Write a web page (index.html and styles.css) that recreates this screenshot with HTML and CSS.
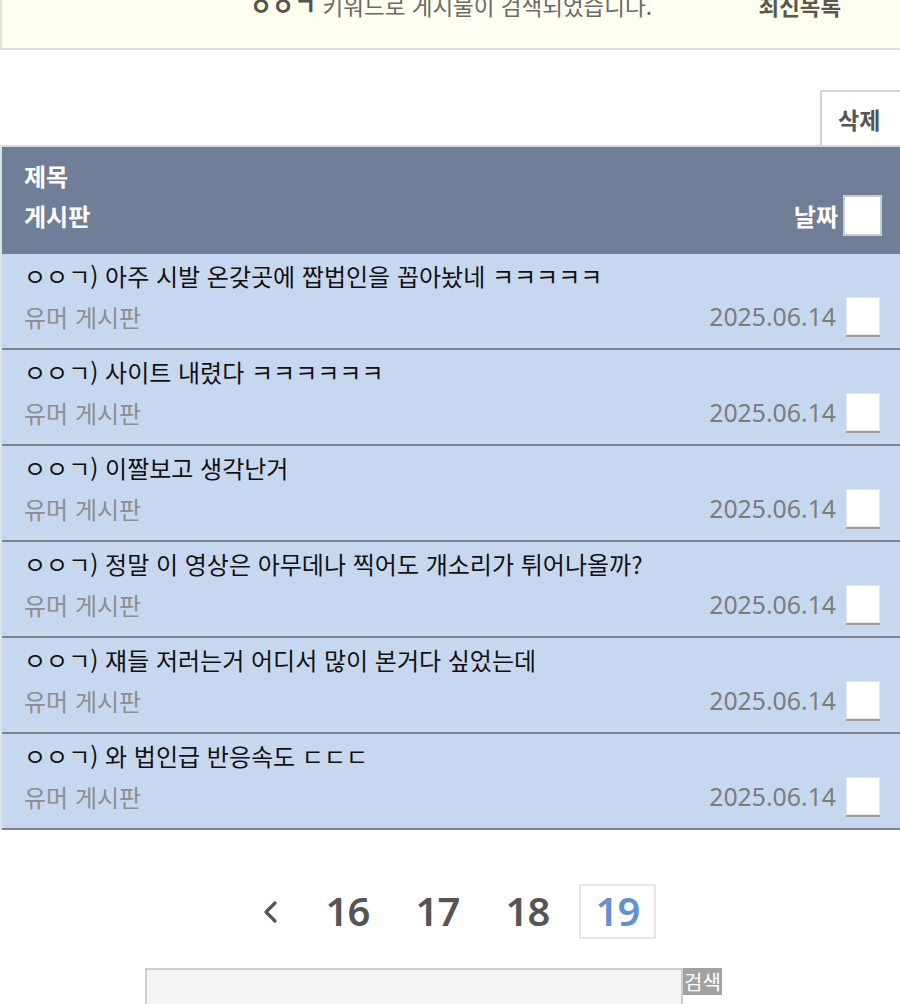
FILE: index.html
```html
<!DOCTYPE html>
<html lang="ko">
<head>
<meta charset="utf-8">
<title>검색 결과</title>
<link rel="stylesheet" href="styles.css">
</head>
<body>
<div class="notice">
  <span></span>
  <div class="notice-text"><b>ㅇㅇㄱ</b> 키워드로 게시물이 검색되었습니다.</div>
  <a class="latest" href="#">최신목록</a>
</div>

<div class="toolbar">
  <button class="btn-delete" type="button">삭제</button>
</div>

<div class="list">
  <div class="row head">
    <div class="title">제목</div>
    <div class="board">게시판</div>
    <div class="date">날짜</div>
    <span class="check"></span>
  </div>
  <div class="row">
    <div class="title">ㅇㅇㄱ) 아주 시발 온갖곳에 짭법인을 꼽아놨네 ㅋㅋㅋㅋㅋ</div>
    <div class="board">유머 게시판</div>
    <div class="date">2025.06.14</div>
    <span class="check"></span>
  </div>
  <div class="row">
    <div class="title">ㅇㅇㄱ) 사이트 내렸다 ㅋㅋㅋㅋㅋㅋ</div>
    <div class="board">유머 게시판</div>
    <div class="date">2025.06.14</div>
    <span class="check"></span>
  </div>
  <div class="row">
    <div class="title">ㅇㅇㄱ) 이짤보고 생각난거</div>
    <div class="board">유머 게시판</div>
    <div class="date">2025.06.14</div>
    <span class="check"></span>
  </div>
  <div class="row">
    <div class="title">ㅇㅇㄱ) 정말 이 영상은 아무데나 찍어도 개소리가 튀어나올까?</div>
    <div class="board">유머 게시판</div>
    <div class="date">2025.06.14</div>
    <span class="check"></span>
  </div>
  <div class="row">
    <div class="title">ㅇㅇㄱ) 쟤들 저러는거 어디서 많이 본거다 싶었는데</div>
    <div class="board">유머 게시판</div>
    <div class="date">2025.06.14</div>
    <span class="check"></span>
  </div>
  <div class="row">
    <div class="title">ㅇㅇㄱ) 와 법인급 반응속도 ㄷㄷㄷ</div>
    <div class="board">유머 게시판</div>
    <div class="date">2025.06.14</div>
    <span class="check"></span>
  </div>
</div>

<div class="pager">
  <a class="page prev" href="#"><svg width="16" height="24" viewBox="0 0 16 24"><path d="M13 3 L4 12 L13 21" fill="none" stroke="#555" stroke-width="3.2" stroke-linecap="round" stroke-linejoin="round"/></svg></a>
  <a class="page" href="#">16</a>
  <a class="page" href="#">17</a>
  <a class="page" href="#">18</a>
  <a class="page current" href="#">19</a>
</div>

<div class="search">
  <input class="search-input" type="text">
  <button class="search-btn" type="button">검색</button>
</div>
</body>
</html>
```
FILE: styles.css
```css
* { box-sizing: border-box; }
html, body { margin: 0; padding: 0; background: #fff; overflow: hidden; }
body {
  width: 900px;
  font-family: "Noto Sans CJK KR", "Noto Sans", sans-serif;
  color: #111;
}

.notice {
  margin-top: -10px;
  height: 60px;
  background: #fefef1;
  border-left: 2px solid #e2e2da;
  border-bottom: 2px solid #deded6;
  display: grid;
  grid-template-columns: 1fr auto 1fr;
  align-items: start;
  line-height: 30px;
}
.notice-text { font-size: 22.5px; color: #6b6a64; }
.notice-text b { font-size: 24px; color: #57544b; font-weight: 700; }
.latest {
  justify-self: end;
  margin-right: 59px;
  font-size: 22.4px;
  font-weight: 700;
  color: #5a574d;
  text-decoration: none;
}

.toolbar {
  display: flex;
  justify-content: flex-end;
  margin-top: 40px;
}
.btn-delete {
  width: 82px;
  height: 55px;
  margin-right: -2px;
  background: #fff;
  border: 2px solid #d3d3d3;
  border-right: 0;
  border-bottom: 0;
  font-family: inherit;
  font-size: 23px;
  font-weight: 700;
  color: #555;
  text-align: left;
  padding: 0 0 0 16px;
}

.list {
  border-top: 2px solid #d6d9de;
  border-left: 2px solid #dde1e8;
}
.row {
  display: grid;
  grid-template-columns: 1fr auto auto;
  grid-template-rows: 42px 40px;
  align-items: center;
  padding: 0 20px 12px 22px;
  background: #c8d7f0;
  border-bottom: 2px solid #7f858f;
}
.row .title {
  grid-column: 1 / 4;
  font-size: 24px;
  color: #111;
  white-space: nowrap;
}
.row .board { font-size: 24px; color: #8b8d92; }
.row .date {
  font-family: "Noto Sans", "Noto Sans CJK KR", sans-serif;
  font-size: 24.8px;
  color: #7a7c80;
}
.check {
  width: 34px;
  height: 38px;
  margin-left: 10px;
  background: #fff;
  border: 1px solid #e4e6ea;
  box-shadow: 0 2px 0 0 #9aa0aa;
}

.row.head {
  background: #717e97;
  padding: 8px 18px 19px 22px;
  grid-template-rows: 40px 40px;
  border-bottom: 0;
}
.row.head .title,
.row.head .board,
.row.head .date {
  color: #fff;
  font-weight: 700;
  font-size: 24px;
  font-family: "Noto Sans CJK KR", sans-serif;
}
.row.head .check {
  width: 39px;
  height: 41px;
  margin-left: 5px;
  border: 2px solid #c9ccd2;
  box-shadow: none;
}

.pager {
  display: flex;
  justify-content: center;
  gap: 13px;
  margin-top: 54px;
}
.page {
  width: 77px;
  height: 55px;
  display: flex;
  align-items: center;
  justify-content: center;
  font-family: "Noto Sans", sans-serif;
  font-size: 40px;
  font-weight: 600;
  color: #555;
  text-decoration: none;
  letter-spacing: -1px;
  border: 2px solid transparent;
  padding-bottom: 3px;
}
.page.prev { width: 52px; padding-bottom: 0; }
.page.current { color: #6490d2; border-color: #e6e6e6; }

.search {
  display: flex;
  align-items: flex-start;
  margin-top: 29px;
  padding-left: 145px;
}
.search-input {
  width: 538px;
  height: 44px;
  background: #f4f4f4;
  border: 2px solid #cfcfcf;
  border-bottom: 0;
  margin: 0;
}
.search-btn {
  width: 39px;
  height: 27px;
  padding: 0;
  border: 0;
  background: #a2a2a2;
  color: #fff;
  font-family: "Noto Sans CJK KR", sans-serif;
  font-size: 20px;
  line-height: 27px;
  overflow: hidden;
  white-space: nowrap;
}
```
